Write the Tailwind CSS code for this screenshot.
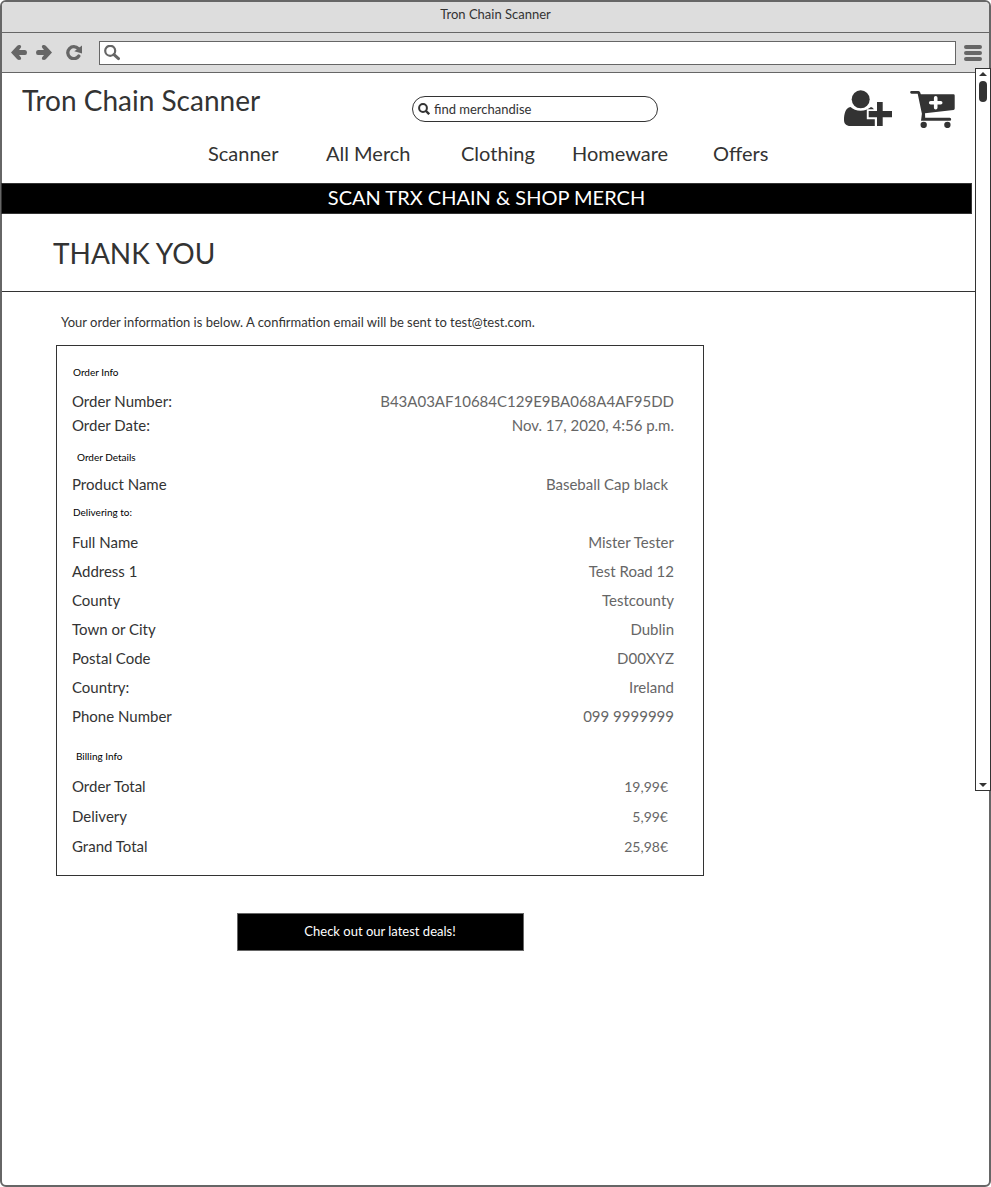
<!DOCTYPE html>
<html lang="en">
<head>
<meta charset="utf-8">
<meta name="viewport" content="width=device-width, initial-scale=1">
<title>Tron Chain Scanner</title>
<script src="https://cdn.jsdelivr.net/npm/@tailwindcss/browser@4"></script>
</head>
<body class="bg-white font-['Lato',sans-serif] text-[#333]">
<div class="relative flex min-h-screen flex-col rounded-md border-2 border-[#666] bg-white">

  <!-- Browser chrome -->
  <div class="h-[31px] rounded-t-sm border-b border-[#666] bg-[#ddd] text-center text-[13px] leading-6">Tron Chain Scanner</div>
  <div class="flex h-10 items-center border-b border-[#666] bg-[#ddd] pr-[7px] pl-[9px] text-[#666]">
    <button type="button" aria-label="Back" class="w-[25px]">
      <svg class="block h-[15px] w-4" viewBox="0 0 16 15" fill="currentColor"><path d="M0 7.500 6 1C7-.2 9.500-.2 10 1c.4 1-.2 1.800-1 2.800L8 5h6q2 0 2 2.500T14 10H8l1 1.200c.8 1 1.400 1.800 1 2.800-.5 1.200-3 1.200-4 0z"/></svg>
    </button>
    <button type="button" aria-label="Forward" class="w-[30px]">
      <svg class="block h-[15px] w-4" viewBox="0 0 16 15" fill="currentColor"><path d="M16 7.500 10 1C9-.2 6.500-.2 6 1c-.4 1 .2 1.800 1 2.800L8 5H2Q0 5 0 7.500T2 10h6l-1 1.200c-.8 1-1.400 1.800-1 2.800.5 1.200 3 1.200 4 0z"/></svg>
    </button>
    <button type="button" aria-label="Reload" class="w-[33px]">
      <svg class="block h-[15px] w-4" viewBox="0 0 16 15"><path d="M12.800 11A6 6 0 1 1 12.300 3.700" fill="none" stroke="currentColor" stroke-width="3.300" stroke-linecap="round"/><path d="M16 .6v8L8.300 6.200z" fill="currentColor"/></svg>
    </button>
    <label class="flex h-6 min-w-0 flex-1 items-center border border-[#666] bg-white px-1">
      <svg class="size-4" viewBox="0 0 16 16" fill="none" stroke="currentColor"><circle cx="6.200" cy="5.800" r="5" stroke-width="2.200"/><path d="m10 9.600 4.500 4" stroke-width="3" stroke-linecap="round"/></svg>
      <input type="text" aria-label="Address" class="min-w-0 flex-1 px-1 text-[13px] outline-none">
    </label>
    <button type="button" aria-label="Menu" class="ml-2">
      <svg class="block h-4 w-[18px]" viewBox="0 0 18 16" stroke="currentColor" stroke-width="4" stroke-linecap="round"><path d="M2 2h14M2 8h14M2 14h14"/></svg>
    </button>
  </div>

  <!-- Page -->
  <div class="mr-[14px]">
    <header class="mr-[3px]">
      <div class="flex h-[58px] items-start pt-[10px] pr-[17px] pl-5">
        <h1 class="w-[390px] text-[28px] leading-[35px]">Tron Chain Scanner</h1>
        <label class="mt-[13px] flex h-[26px] w-[246px] items-center gap-1 rounded-full border border-[#333] pr-3 pl-[5px]">
          <svg class="size-3" viewBox="0 0 12 12" fill="none" stroke="currentColor" stroke-width="2"><circle cx="5" cy="5" r="3.900"/><path d="m8 8 3.200 3.200" stroke-width="2.400"/></svg>
          <input type="search" aria-label="Find merchandise" placeholder="find merchandise" class="min-w-0 flex-1 pt-px text-[13px] outline-none placeholder:text-[#333]">
        </label>
        <div class="mt-[7px] ml-auto flex gap-[18px]">
          <a href="#" aria-label="Register">
            <svg class="h-[38px] w-12" viewBox="0 0 48 38" fill="currentColor"><path d="M6.500 17C9 19.200 12.500 20.700 16.700 20.700S24 19.200 27 17c2.500.6 3.500 3 3.800 6v13H6.500C2 36 0 33.500 0 30 0 24 1.500 17.500 6.500 17z"/><circle cx="16.700" cy="9.300" r="9"/><path d="M22.800 19.200H31.200V17H40v12.200H38V36H31.200V29.200H22.800z" fill="#fff"/><path d="M33 12h5.700v9H48v6.300h-9.300V36H33v-8.700h-8.300V21H33z"/></svg>
          </a>
          <a href="#" aria-label="Cart">
            <svg class="h-[38px] w-[45px]" viewBox="0 0 45 38" fill="currentColor"><path d="M1.500 1H8.500q1.300 0 1.700 1.500l.6 1.700H43.500q1.200 0 1.200 1.200V18.500q0 1.300-1.200 1.500L15 23.300l.2 4.400H39.700a1.500 1.500 0 0 1 0 3H11l.9-7L7.700 3.700H1.500A1.300 1.300 0 0 1 1.500 1z"/><circle cx="13.700" cy="34.900" r="3.200"/><circle cx="37.400" cy="34.900" r="3.200"/><path d="M25.700 7.700v10M20.700 12.700h10" fill="none" stroke="#fff" stroke-width="3.600" stroke-linecap="round"/></svg>
          </a>
        </div>
      </div>
      <nav class="mt-[10px] flex h-6 items-center pl-[206px] text-[20px] leading-6">
        <a href="#" class="w-[118px]">Scanner</a>
        <a href="#" class="w-[135px]">All Merch</a>
        <a href="#" class="w-[111px]">Clothing</a>
        <a href="#" class="w-[141px]">Homeware</a>
        <a href="#">Offers</a>
      </nav>
      <div class="mt-[18px] -ml-px border border-[#333] bg-black pb-[2px] text-center text-[20px] leading-[27px] text-white">SCAN TRX CHAIN &amp; SHOP MERCH</div>
    </header>

    <main>
      <h2 class="border-b border-[#333] pt-[19px] pb-[18px] pl-[51px] text-[28px] leading-10">THANK YOU</h2>
      <div class="ml-[54px] max-w-[648px]">
        <p class="mt-5 pl-[5px] text-[13px] leading-5">Your order information is below. A confirmation email will be sent to test@test.com.</p>
        <div class="mt-[13px] border border-[#333] pt-[18px] pr-[29px] pb-[14px] pl-[15px] text-[15px]">
          <section>
            <h3 class="mb-[9px] pl-px text-[10px] leading-4 text-black">Order Info</h3>
            <dl>
              <div class="flex h-6 items-center justify-between"><dt>Order Number:</dt><dd class="text-[#666]">B43A03AF10684C129E9BA068A4AF95DD</dd></div>
              <div class="flex h-6 items-center justify-between"><dt>Order Date:</dt><dd class="text-[#666]">Nov. 17, 2020, 4:56 p.m.</dd></div>
            </dl>
          </section>
          <section class="mt-3">
            <h3 class="mb-[7px] pl-[5px] text-[10px] leading-4 text-black">Order Details</h3>
            <dl>
              <div class="flex h-6 items-center justify-between"><dt>Product Name</dt><dd class="pr-[6px] text-[#666]">Baseball Cap black</dd></div>
            </dl>
          </section>
          <section class="mt-2">
            <h3 class="mb-2 pl-px text-[10px] leading-4 text-black">Delivering to:</h3>
            <dl>
              <div class="flex h-[29px] items-center justify-between"><dt>Full Name</dt><dd class="text-[#666]">Mister Tester</dd></div>
              <div class="flex h-[29px] items-center justify-between"><dt>Address 1</dt><dd class="text-[#666]">Test Road 12</dd></div>
              <div class="flex h-[29px] items-center justify-between"><dt>County</dt><dd class="text-[#666]">Testcounty</dd></div>
              <div class="flex h-[29px] items-center justify-between"><dt>Town or City</dt><dd class="text-[#666]">Dublin</dd></div>
              <div class="flex h-[29px] items-center justify-between"><dt>Postal Code</dt><dd class="text-[#666]">D00XYZ</dd></div>
              <div class="flex h-[29px] items-center justify-between"><dt>Country:</dt><dd class="text-[#666]">Ireland</dd></div>
              <div class="flex h-[29px] items-center justify-between"><dt>Phone Number</dt><dd class="text-[#666]">099 9999999</dd></div>
            </dl>
          </section>
          <section class="mt-[17px]">
            <h3 class="mb-[7px] pl-1 text-[10px] leading-4 text-black">Billing Info</h3>
            <dl>
              <div class="flex h-[30px] items-center justify-between"><dt>Order Total</dt><dd class="pr-[6px] text-[14px] text-[#666]">19,99€</dd></div>
              <div class="flex h-[30px] items-center justify-between"><dt>Delivery</dt><dd class="pr-[6px] text-[14px] text-[#666]">5,99€</dd></div>
              <div class="flex h-[30px] items-center justify-between"><dt>Grand Total</dt><dd class="pr-[6px] text-[14px] text-[#666]">25,98€</dd></div>
            </dl>
          </section>
        </div>
        <button type="button" class="mx-auto mt-[37px] block h-[38px] w-[287px] border border-[#666] bg-black text-[13px] text-white">Check out our latest deals!</button>
      </div>
    </main>
  </div>

  <!-- Scroll bar laid over the window's right edge -->
  <div class="absolute top-[66px] -right-[2px] flex h-[723px] w-4 flex-col items-center border border-[#333] bg-white pt-[3px] pb-[3px] text-[#333]">
    <svg class="h-1 w-2" viewBox="0 0 8 4" fill="currentColor"><path d="M4 0 8 4H0z"/></svg>
    <div class="mt-[5px] h-[21px] w-2 rounded-full bg-[#333]"></div>
    <svg class="mt-auto h-1 w-2" viewBox="0 0 8 4" fill="currentColor"><path d="M0 0H8L4 4z"/></svg>
  </div>
</div>
</body>
</html>
